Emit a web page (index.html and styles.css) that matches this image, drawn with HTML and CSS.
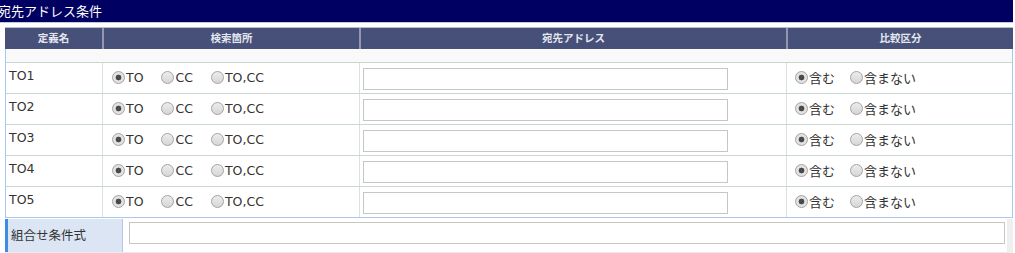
FILE: index.html
```html
<!DOCTYPE html>
<html lang="ja">
<head>
<meta charset="utf-8">
<link rel="stylesheet" href="styles.css">
</head>
<body>
<div class="title">宛先アドレス条件</div>
<div class="table">
  <div class="head">
    <div class="hcell">定義名</div>
    <div class="hcell">検索箇所</div>
    <div class="hcell">宛先アドレス</div>
    <div class="hcell">比較区分</div>
  </div>
  <div class="body">
    <div class="spacer"></div>
    <div class="row">
      <div class="cell name">TO1</div>
      <div class="cell radios"><label class="opt"><input type="radio" name="p1" checked>TO</label><label class="opt"><input type="radio" name="p1">CC</label><label class="opt"><input type="radio" name="p1">TO,CC</label></div>
      <div class="cell addr"><input type="text" class="text"></div>
      <div class="cell radios cmp"><label class="opt"><input type="radio" name="c1" checked>含む</label><label class="opt"><input type="radio" name="c1">含まない</label></div>
    </div>
    <div class="row">
      <div class="cell name">TO2</div>
      <div class="cell radios"><label class="opt"><input type="radio" name="p2" checked>TO</label><label class="opt"><input type="radio" name="p2">CC</label><label class="opt"><input type="radio" name="p2">TO,CC</label></div>
      <div class="cell addr"><input type="text" class="text"></div>
      <div class="cell radios cmp"><label class="opt"><input type="radio" name="c2" checked>含む</label><label class="opt"><input type="radio" name="c2">含まない</label></div>
    </div>
    <div class="row">
      <div class="cell name">TO3</div>
      <div class="cell radios"><label class="opt"><input type="radio" name="p3" checked>TO</label><label class="opt"><input type="radio" name="p3">CC</label><label class="opt"><input type="radio" name="p3">TO,CC</label></div>
      <div class="cell addr"><input type="text" class="text"></div>
      <div class="cell radios cmp"><label class="opt"><input type="radio" name="c3" checked>含む</label><label class="opt"><input type="radio" name="c3">含まない</label></div>
    </div>
    <div class="row">
      <div class="cell name">TO4</div>
      <div class="cell radios"><label class="opt"><input type="radio" name="p4" checked>TO</label><label class="opt"><input type="radio" name="p4">CC</label><label class="opt"><input type="radio" name="p4">TO,CC</label></div>
      <div class="cell addr"><input type="text" class="text"></div>
      <div class="cell radios cmp"><label class="opt"><input type="radio" name="c4" checked>含む</label><label class="opt"><input type="radio" name="c4">含まない</label></div>
    </div>
    <div class="row">
      <div class="cell name">TO5</div>
      <div class="cell radios"><label class="opt"><input type="radio" name="p5" checked>TO</label><label class="opt"><input type="radio" name="p5">CC</label><label class="opt"><input type="radio" name="p5">TO,CC</label></div>
      <div class="cell addr"><input type="text" class="text"></div>
      <div class="cell radios cmp"><label class="opt"><input type="radio" name="c5" checked>含む</label><label class="opt"><input type="radio" name="c5">含まない</label></div>
    </div>
  </div>
  <div class="combo">
    <div class="combo-label">組合せ条件式</div>
    <div class="combo-field"><input type="text" class="text wide"></div>
  </div>
</div>
</body>
</html>
```

FILE: styles.css
```css
* { box-sizing: border-box; }
body {
  margin: 0;
  width: 1015px;
  background: #fff;
  font-family: "DejaVu Sans", "Noto Sans CJK JP", sans-serif;
  color: #333;
}
.title {
  height: 23px;
  background: #000062;
  color: #fff;
  font-family: "Noto Sans CJK JP", sans-serif;
  font-size: 13px;
  line-height: 21px;
  text-indent: -2px;
  border-bottom: 1px solid #c9c9d6;
  width: 1013px;
}
.table {
  margin: 4px 0 0 5px;
  width: 1008px;
}
.head {
  display: grid;
  grid-template-columns: 97px 257px 427px 227px;
  height: 22px;
  background: #465079;
  border-top: 1px solid #b8bccc;
}
.hcell {
  color: #e4e6ee;
  font-family: "Noto Sans CJK JP", sans-serif;
  font-size: 10.5px;
  font-weight: bold;
  line-height: 20px;
  text-align: center;
}
.hcell + .hcell { border-left: 2px solid #9297ad; }
.body {
  border: 1px solid #a9c8ef;
  border-top: none;
}
.spacer {
  height: 14px;
  background: #f9f9f9;
  border-bottom: 1px solid #c9d6d2;
}
.row {
  display: grid;
  grid-template-columns: 96px 257px 427px 226px;
  height: 31px;
  border-bottom: 1px solid #c9d6d2;
}
.row:last-child { height: 30px; border-bottom: none; }
.cell {
  display: flex;
  align-items: center;
  padding-bottom: 1px;
}
.cell + .cell { border-left: 1px solid #d9e2df; }
.name {
  padding: 0 0 5px 3px;
  font-size: 12.5px;
  color: #333;
}
.radios {
  padding-left: 9px;
  gap: 18px;
}
.cmp { padding-left: 8px; gap: 15px; }
.opt {
  display: flex;
  align-items: center;
  font-size: 12.5px;
  color: #333;
}
.cmp .opt { font-family: "Noto Sans CJK JP", sans-serif; font-size: 13px; }
input[type="radio"] {
  appearance: none;
  -webkit-appearance: none;
  margin: 0 1px 0 0;
  width: 13px;
  height: 13px;
  border-radius: 50%;
  border: 1px solid #a3a3a3;
  background: linear-gradient(#ececec, #d6d6d6);
}
input[type="radio"]:checked {
  background: radial-gradient(circle, #4a4a4a 0 2.6px, #e2e2e2 3.2px);
}
.addr { padding-left: 3px; }
.text {
  width: 365px;
  height: 22px;
  border: 1px solid #c6c6c6;
  background: #fff;
  margin: 2px 0 0 0;
  padding: 0;
}
.combo {
  display: flex;
  margin-top: 1px;
  height: 35px;
  border-right: 6px solid #efefef;
  border-bottom: 2px solid #ececec;
}
.combo-label {
  width: 118px;
  background: #dbe5f4;
  border-left: 3px solid #3d8de2;
  border-right: 1px solid #b4c9e6;
  font-family: "Noto Sans CJK JP", sans-serif;
  font-size: 12.5px;
  color: #333;
  display: flex;
  align-items: center;
  padding: 0 0 2px 3px;
}
.combo-field {
  flex: 1;
  padding: 3px 0 0 6px;
}
.text.wide {
  width: 876px;
  margin: 0;
}
```
